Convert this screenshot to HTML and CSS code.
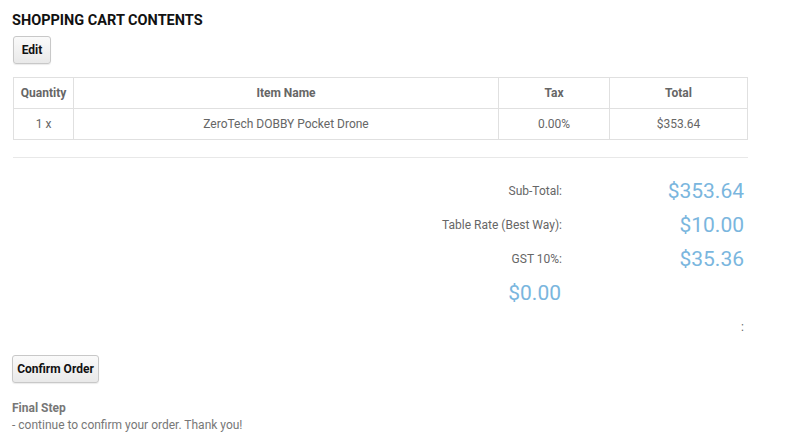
FILE: index.html
```html
<!DOCTYPE html>
<html>
<head>
<meta charset="utf-8">
<link rel="stylesheet" href="styles.css">
</head>
<body>
<div class="page">
  <h1 class="title">SHOPPING CART CONTENTS</h1>
  <button class="btn btn-edit">Edit</button>
  <table class="cart">
    <thead>
      <tr>
        <th class="c-qty">Quantity</th>
        <th class="c-name">Item Name</th>
        <th class="c-tax">Tax</th>
        <th class="c-total">Total</th>
      </tr>
    </thead>
    <tbody>
      <tr>
        <td>1 x</td>
        <td>ZeroTech DOBBY Pocket Drone</td>
        <td>0.00%</td>
        <td>$353.64</td>
      </tr>
    </tbody>
  </table>
  <hr class="divider">
  <div class="summary">
    <div class="label">Sub-Total:</div>
    <div class="value">$353.64</div>
    <div class="label">Table Rate (Best Way):</div>
    <div class="value">$10.00</div>
    <div class="label">GST 10%:</div>
    <div class="value">$35.36</div>
    <div class="label big">$0.00</div>
    <div class="value"></div>
    <div class="label"></div>
    <div class="colon">:</div>
  </div>
  <button class="btn btn-confirm">Confirm Order</button>
  <div class="final">
    <div class="final-title">Final Step</div>
    <div class="final-text">- continue to confirm your order. Thank you!</div>
  </div>
</div>
</body>
</html>
```
FILE: styles.css
```css
html, body {
  margin: 0;
  padding: 0;
  background: #fff;
}
body {
  font-family: Roboto, "Liberation Sans", Arial, sans-serif;
  color: #666;
  font-size: 12px;
}
.page {
  padding: 11px 12px 0 12px;
  width: 736px;
}
.title {
  margin: 0;
  font-size: 14.5px;
  font-weight: 700;
  color: #111;
  line-height: 20px;
  letter-spacing: 0;
}
.btn {
  display: block;
  font-family: Roboto, "Liberation Sans", Arial, sans-serif;
  font-weight: 700;
  font-size: 12px;
  color: #111;
  background: linear-gradient(#fafafa, #e9e9e9);
  border: 1px solid #c8c8c8;
  border-radius: 3px;
  box-shadow: 0 1px 1px rgba(0,0,0,0.08);
  padding: 0;
  cursor: pointer;
}
.btn-edit {
  margin-top: 5px;
  width: 38px;
  height: 28px;
  margin-left: 1px;
}
.cart {
  margin-top: 13px;
  margin-left: 1px;
  width: 735px;
  border-collapse: collapse;
  border: 1px solid #e0e0e0;
}
.cart th, .cart td {
  border: 1px solid #e0e0e0;
  height: 30px;
  padding: 0;
  text-align: center;
  font-size: 12px;
  color: #666;
}
.cart th {
  font-weight: 700;
}
.c-qty { width: 59px; }
.c-name { width: 424px; }
.c-tax { width: 110px; }
.divider {
  margin: 17px 0 0 1px;
  width: 735px;
  border: 0;
  border-top: 1px solid #e8e8e8;
  height: 0;
}
.summary {
  display: grid;
  grid-template-columns: 550px 182px;
  grid-auto-rows: 34px;
  margin-top: 16px;
  align-items: center;
}
.label {
  text-align: right;
  color: #666;
  font-size: 12px;
}
.label.big {
  font-size: 21px;
  color: #7ab6de;
  padding-right: 1px;
}
.value {
  text-align: right;
  font-size: 21px;
  color: #7ab6de;
}
.colon {
  text-align: right;
  color: #666;
  font-size: 12px;
}
.btn-confirm {
  margin-top: 11px;
  width: 87px;
  height: 28px;
}
.final {
  margin-top: 17px;
  line-height: 17px;
  color: #777;
}
.final-title {
  font-weight: 700;
}
```
